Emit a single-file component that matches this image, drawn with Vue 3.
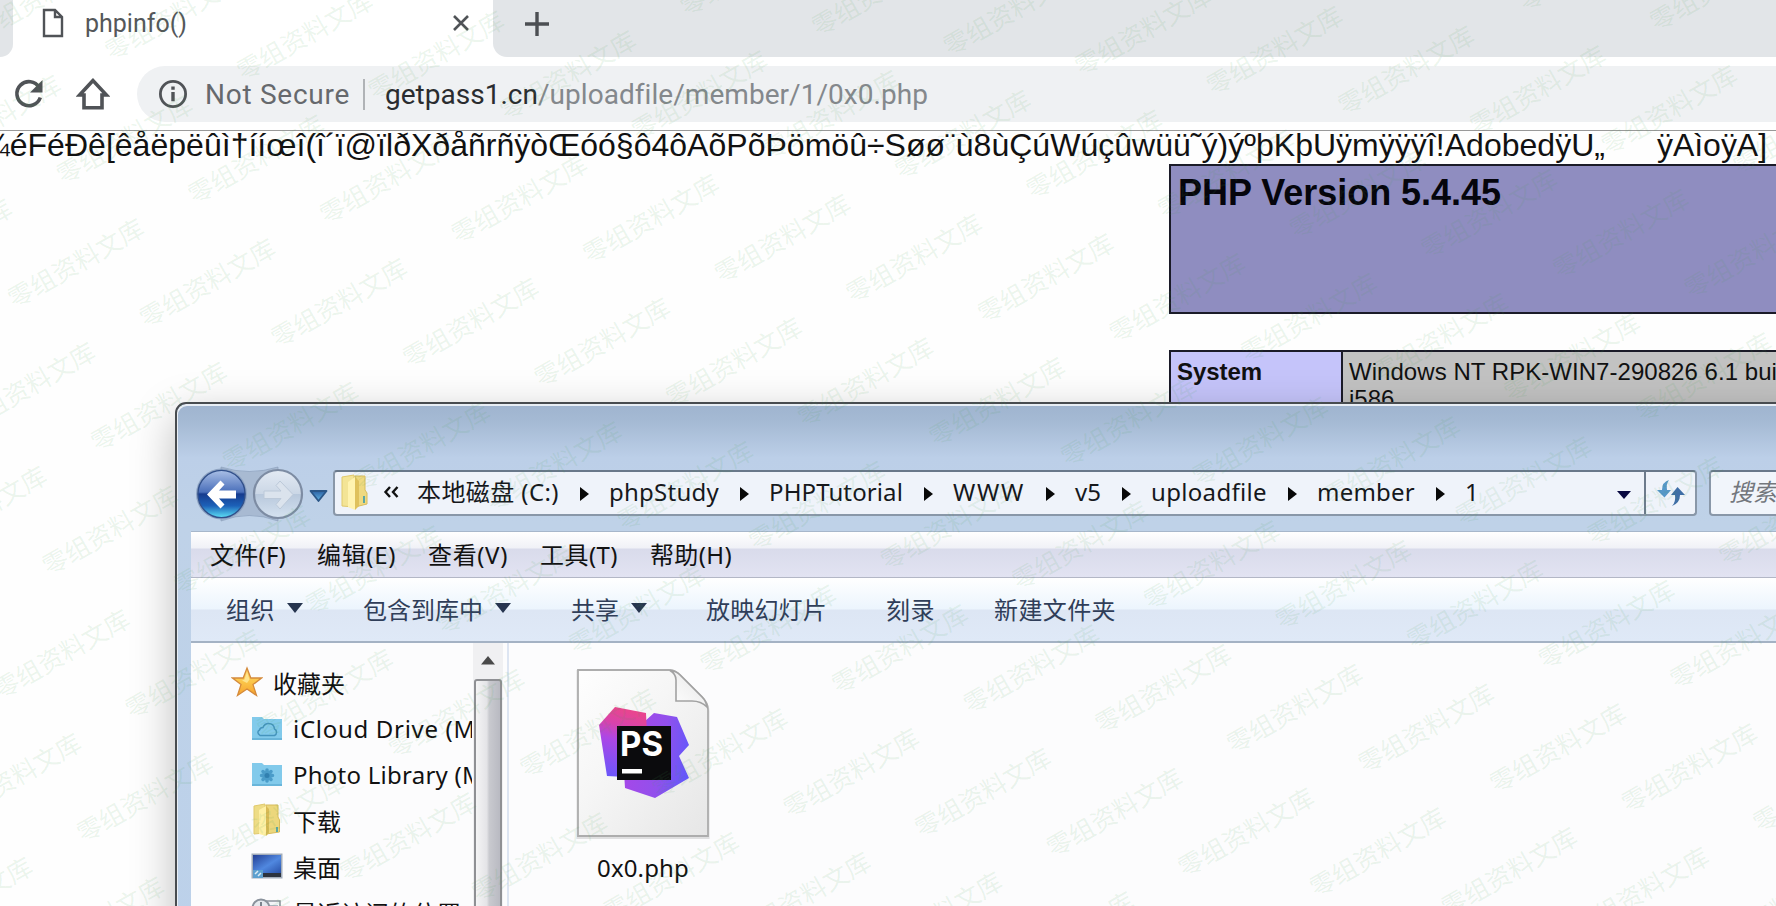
<script setup>
// Spreads a label's letters so that it takes exactly the given width.
const vFit = {
  mounted(el, { value }) {
    const natural = el.getBoundingClientRect().width
    const count = [...el.textContent].length
    el.style.letterSpacing = (value - natural) / count + 'px'
    el.style.width = value + 'px'
  }
}

const crumbs = [
  { text: '本地磁盘 (C:)', w: 142 },
  { text: 'phpStudy', w: 110 },
  { text: 'PHPTutorial', w: 134 },
  { text: 'WWW', w: 72 },
  { text: 'v5', w: 26 },
  { text: 'uploadfile', w: 116 },
  { text: 'member', w: 98 },
  { text: '1', w: 14 }
]

const menus = [
  { text: '文件(F)', w: 76, gap: 31 },
  { text: '编辑(E)', w: 79, gap: 32 },
  { text: '查看(V)', w: 80, gap: 32 },
  { text: '工具(T)', w: 78, gap: 32 },
  { text: '帮助(H)', w: 82, gap: 0 }
]

const commands = [
  { text: '组织', w: 49, drop: true, gap: 60 },
  { text: '包含到库中', w: 120, drop: true, gap: 60 },
  { text: '共享', w: 48, drop: true, gap: 59 },
  { text: '放映幻灯片', w: 121, gap: 59 },
  { text: '刻录', w: 49, gap: 59 },
  { text: '新建文件夹', w: 122, gap: 0 }
]

const places = [
  { icon: 'cloud', text: 'iCloud Drive (M', w: 183 },
  { icon: 'photo', text: 'Photo Library (M', w: 191 },
  { icon: 'folder', text: '下载', w: 48 },
  { icon: 'desktop', text: '桌面', w: 48 },
  { icon: 'recent', text: '最近访问的位置', w: 168 }
]

const dump = '¼éFéÐê[êåëpëûì†ííœî(î´ï@ïlðXðåñrñÿòŒóó§ô4ôAõPõÞömöû÷Søø¨ù8ùÇúWúçûwüü˜ý)ýºþKþUÿmÿÿÿî!AdobedÿU„'

const marks = []
for (let row = -6; row <= 4; row++) {
  for (let col = -4; col <= 18; col++) {
    const x = 21 + col * 131.6 + row * 48.6
    const y = 295 + col * 19.8 - row * 123.7
    if (x > -130 && x < 1780 && y > -15 && y < 985) marks.push({ x, y })
  }
}
</script>

<template>
  <div class="screen">
    <div class="tabs">
      <div class="tab-prev"></div>
      <div class="tab">
        <svg class="doc" width="22" height="30" viewBox="0 0 22 30">
          <path d="M2 2H13L20 9V28H2Z M13 2V9H20" fill="none" stroke="#505357" stroke-width="2.4" />
        </svg>
        <span v-fit="102" class="tab-title">phpinfo()</span>
        <svg class="close" width="18" height="18" viewBox="0 0 18 18">
          <path d="M2 2L16 16M16 2L2 16" stroke="#505357" stroke-width="2.6" />
        </svg>
      </div>
      <div class="tab-rest">
        <svg width="26" height="26" viewBox="0 0 26 26">
          <path d="M13 1V25M1 13H25" stroke="#4c4f53" stroke-width="3.4" />
        </svg>
      </div>
    </div>

    <div class="toolbar">
      <svg class="reload" width="32" height="32" viewBox="0 0 32 32">
        <path d="M26.2 9.5A12 12 0 1 0 27.3 19.5" fill="none" stroke="#505357" stroke-width="3.6" />
        <path d="M29.5 2V14.5H17Z" fill="#505357" />
      </svg>
      <svg class="home" width="34" height="34" viewBox="0 0 34 34">
        <path d="M17 3.6L3.6 18H8V30.8H26V18H30.4Z" fill="none" stroke="#505357" stroke-width="3.6" />
      </svg>
      <div class="omnibox">
        <svg width="30" height="30" viewBox="0 0 30 30">
          <circle cx="15" cy="15" r="12.6" fill="none" stroke="#505357" stroke-width="2.8" />
          <path d="M13.3 7.6H16.7V10.8H13.3ZM13.3 13H16.7V22.2H13.3Z" fill="#505357" />
        </svg>
        <span v-fit="145" class="insecure">Not Secure</span>
        <i class="bar"></i>
        <span v-fit="153" class="host">getpass1.cn</span>
        <span v-fit="389" class="path">/uploadfile/member/1/0x0.php</span>
      </div>
    </div>

    <div class="page">
      <div class="dump">
        <span v-fit="1622">{{ dump }}</span>
        <span v-fit="110" class="tail">ÿAìoÿA]</span>
      </div>
      <div class="php-head"><span v-fit="323">PHP Version 5.4.45</span></div>
      <div class="php-row">
        <div class="php-key"><span v-fit="85">System</span></div>
        <div class="php-val"><span v-fit="428">Windows NT RPK-WIN7-290826 6.1 bui</span><br />i586</div>
      </div>
    </div>

    <div class="window">
      <div class="caption"></div>
      <div class="nav">
        <svg class="nav-buttons" width="162" height="60" viewBox="0 0 162 60">
          <defs>
            <linearGradient id="back" x1="0" y1="0" x2="0" y2="1">
              <stop offset="0" stop-color="#a9bfe6" />
              <stop offset=".46" stop-color="#4a6fba" />
              <stop offset=".5" stop-color="#163b8e" />
              <stop offset=".75" stop-color="#1c61b8" />
              <stop offset="1" stop-color="#5ce0f6" />
            </linearGradient>
            <linearGradient id="fwd" x1="0" y1="0" x2="0" y2="1">
              <stop offset="0" stop-color="#e3eaf3" />
              <stop offset=".49" stop-color="#cbd7e6" />
              <stop offset=".5" stop-color="#b8c8dc" />
              <stop offset="1" stop-color="#d5e2f0" />
            </linearGradient>
            <linearGradient id="drop" x1="0" y1="0" x2="0" y2="1">
              <stop offset="0" stop-color="#2c62a4" />
              <stop offset="1" stop-color="#63b5e4" />
            </linearGradient>
          </defs>
          <path d="M44 3Q72 12 101 3L101 57Q72 46 44 57Z" fill="#a8bad2" stroke="#8599b5" stroke-opacity=".6" />
          <circle cx="44.500" cy="30" r="25.500" fill="#8ea3c2" />
          <circle cx="44.500" cy="30" r="23.6" fill="url(#back)" stroke="#31508a" stroke-width="1.4" />
          <path d="M30 30.500L43.500 16.500L47.500 20.500L42 26.500H59V34.500H42L47.500 40.500L43.500 44.500Z" fill="#fff" />
          <circle cx="101" cy="30" r="24" fill="url(#fwd)" stroke="#7d8ca3" stroke-width="2.2" />
          <path d="M116 30.500L103 17L99 21.500L104 27H87V34.500H104L99 40.500L103 45Z" fill="#dbe3ed" stroke="#bcc9d9" />
          <path d="M133.500 27H149.500L141.500 37Z" fill="url(#drop)" stroke="#2b5788" stroke-width="1.8" stroke-linejoin="round" />
        </svg>
        <div class="address">
          <svg class="folder" width="28" height="38" viewBox="0 0 28 38">
            <path d="M2 4L14 2V34L2 33Z" fill="#f3e496" stroke="#e0c96c" />
            <path d="M15 3H25V17L27 20V31L15 34Z" fill="#efd980" stroke="#d7bc5b" />
            <path d="M8 9L15 4V37L8 34Z" fill="#fff3b0" />
            <path d="M15 4L19 8V33L15 37Z" fill="#dfc15c" />
            <path d="M24 23V30" stroke="#5ba6a5" stroke-width="2" />
          </svg>
          <svg class="more" width="16" height="12" viewBox="0 0 16 12">
            <path d="M7 1L2.500 6L7 11M14.500 1L10 6L14.500 11" fill="none" stroke="#111" stroke-width="2.4" />
          </svg>
          <template v-for="(c, i) in crumbs" :key="c.text">
            <span v-fit="c.w" class="crumb">{{ c.text }}</span>
            <i v-if="i < crumbs.length - 1" class="chev"></i>
          </template>
          <i class="addr-drop"></i>
          <div class="refresh">
            <svg width="30" height="28" viewBox="0 0 30 28">
              <path d="M13 1Q6 3 6 11H1L8.500 18.500L15 11H11Q10 5 13 1Z" fill="#5597c8" />
              <path d="M16 27Q24 24 24 16H29L21.500 8L15 16H19Q20 23 16 27Z" fill="#3f6ea6" />
            </svg>
          </div>
        </div>
        <div class="search"><span v-fit="48">搜索</span></div>
      </div>

      <div class="menubar">
        <span v-for="m in menus" :key="m.text" v-fit="m.w" :style="{ marginRight: m.gap + 'px' }">{{ m.text }}</span>
      </div>

      <div class="commands">
        <div v-for="c in commands" :key="c.text" class="command" :style="{ marginRight: c.gap + 'px' }">
          <span v-fit="c.w">{{ c.text }}</span><i v-if="c.drop"></i>
        </div>
      </div>

      <div class="body">
        <div class="tree">
          <div class="fav">
            <svg width="32" height="32" viewBox="0 0 32 32">
              <defs>
                <linearGradient id="star" x1="0" y1="0" x2="0" y2="1">
                  <stop offset="0" stop-color="#ffd467" />
                  <stop offset=".5" stop-color="#fbc64a" />
                  <stop offset="1" stop-color="#f7a02c" />
                </linearGradient>
              </defs>
              <path d="M16 2L19.800 12H30.500L22 18.600L25.500 29.500L16 23L6.500 29.500L10 18.600L1.500 12H12.200Z" fill="url(#star)" stroke="#d48a3c" stroke-width="1.300" />
              <path d="M16 6L18.500 13.500L16 17L11 14.500L13.500 13.500Z" fill="#fff0a8" opacity=".7" />
            </svg>
            <span v-fit="72">收藏夹</span>
          </div>
          <div v-for="p in places" :key="p.text" class="place">
            <svg v-if="p.icon === 'cloud'" width="32" height="26" viewBox="0 0 32 26">
              <path d="M1 2H11L13 4H31V25H1Z" fill="#82caeb" />
              <path d="M1 24H31" stroke="#69b5da" stroke-width="2" />
              <path d="M9 20.500H23.500A3.600 3.600 0 0 0 23.500 14Q23 8.500 17.500 8.500Q13.500 8.500 12 12.500Q9 12.500 8.500 15Q5 17 9 20.500Z" fill="none" stroke="#4594bd" stroke-width="1.500" />
            </svg>
            <svg v-else-if="p.icon === 'photo'" width="32" height="26" viewBox="0 0 32 26">
              <path d="M1 2H11L13 4H31V25H1Z" fill="#82caeb" />
              <path d="M1 24H31" stroke="#69b5da" stroke-width="2" />
              <g stroke="#4a9cc9" stroke-width="3.500" stroke-linecap="round">
                <path d="M16 9V20M10.500 14.500H21.500M12 10.500L20 18.500M20 10.500L12 18.500" />
              </g>
              <circle cx="16" cy="14.500" r="2.500" fill="#3180b0" />
            </svg>
            <svg v-else-if="p.icon === 'folder'" width="32" height="34" viewBox="0 0 32 34">
              <path d="M3 3L14 1V30L3 31Z" fill="#eedc86" stroke="#e0c96c" />
              <path d="M15 2H27V14L28.500 17V29L15 31Z" fill="#ecd77c" stroke="#d7bc5b" />
              <path d="M8 7L15 3V33L8 31Z" fill="#fff0a5" />
              <path d="M15 3L18 6V30L15 33Z" fill="#d9ba55" />
              <path d="M26 24V29" stroke="#5ba6a5" stroke-width="2" />
            </svg>
            <svg v-else-if="p.icon === 'desktop'" width="32" height="26" viewBox="0 0 32 26">
              <defs>
                <linearGradient id="desk" x1="0" y1="0" x2="1" y2="1">
                  <stop offset="0" stop-color="#243f94" />
                  <stop offset=".55" stop-color="#5088e0" />
                  <stop offset="1" stop-color="#2951a8" />
                </linearGradient>
              </defs>
              <path d="M.500 .500H31.500V25.500H.500Z" fill="#a3adba" />
              <path d="M2 2H30V20H2Z" fill="url(#desk)" />
              <path d="M2 20H30V24H2Z" fill="#2c333e" />
              <path d="M2 17H12V25H2Z" fill="#5da0cf" />
              <path d="M4 21L7 18M7 23L10 20" stroke="#dcecf5" stroke-width="1.500" />
            </svg>
            <svg v-else width="32" height="28" viewBox="0 0 32 28">
              <path d="M12 3H29V27H12Z" fill="#f3f5f8" stroke="#8d939c" stroke-width="1.500" />
              <path d="M18 8H27M18 12H27" stroke="#9aa4b4" stroke-width="1.500" />
              <circle cx="10" cy="10" r="8.500" fill="#e5e9ee" stroke="#8a929c" stroke-width="2" />
              <path d="M10 4V11H14" fill="none" stroke="#59616d" stroke-width="1.500" />
            </svg>
            <span v-fit="p.w">{{ p.text }}</span>
          </div>
        </div>
        <div class="scroll">
          <svg width="16" height="10" viewBox="0 0 16 10"><path d="M1 9.500L8 1L15 9.500Z" fill="#4a4a4a" /></svg>
          <div class="thumb"></div>
        </div>
        <div class="files">
          <div class="file">
            <svg width="140" height="176" viewBox="0 0 140 176">
              <defs>
                <linearGradient id="paper" x1="0" y1="0" x2="1" y2="1">
                  <stop offset="0" stop-color="#fefefe" />
                  <stop offset=".4" stop-color="#f6f6f6" />
                  <stop offset="1" stop-color="#e6e6e6" />
                </linearGradient>
                <linearGradient id="fold" x1="0" y1="1" x2="1" y2="0">
                  <stop offset="0" stop-color="#fff" />
                  <stop offset=".6" stop-color="#f0f0f0" />
                  <stop offset="1" stop-color="#bdbdbd" />
                </linearGradient>
                <linearGradient id="psa" x1=".3" y1="0" x2=".1" y2="1">
                  <stop offset="0" stop-color="#e8458f" />
                  <stop offset=".22" stop-color="#d843ab" />
                  <stop offset=".45" stop-color="#ac47e6" />
                  <stop offset="1" stop-color="#6657fb" />
                </linearGradient>
                <linearGradient id="psb" x1="0" y1=".3" x2="1" y2=".5">
                  <stop offset="0" stop-color="#a946e8" />
                  <stop offset=".6" stop-color="#9250ec" />
                  <stop offset="1" stop-color="#6457fb" />
                </linearGradient>
              </defs>
              <path d="M5 4H96Q102 4 107 9L129 31Q135 37 135 44V170H5Z" fill="none" stroke="#a9a9a9" stroke-width="3" opacity=".35" transform="translate(0 1.500)" />
              <path d="M5 4H96Q102 4 107 9L129 31Q135 37 135 44V170H5Z" fill="url(#paper)" stroke="#adadad" stroke-width="1.800" />
              <path d="M97 4.500Q103 8 103 14V35H119Q128 35 134 41Q133 35 129 31L107 9Q103 5 97 4.500Z" fill="url(#fold)" stroke="#a2a2a2" stroke-width="1.600" />
              <path d="M71 56L81 47L104 51L116 79L106 90L116 112L82 132L52 122L50 90Z" fill="url(#psb)" />
              <path d="M42 41L73 47L75 90L52 111L34 110L26 59Z" fill="url(#psa)" />
              <path d="M44 60H98V114H44Z" fill="#0b0b0d" />
              <path d="M49 103H69V107.500H49Z" fill="#fff" />
              <text x="47" y="90" textLength="43" lengthAdjust="spacingAndGlyphs" class="ps">PS</text>
            </svg>
            <span v-fit="92">0x0.php</span>
          </div>
        </div>
      </div>
    </div>

    <svg class="marks" width="1776" height="906" viewBox="0 0 1776 906">
      <text v-for="(m, i) in marks" :key="i" :transform="`translate(${m.x} ${m.y}) rotate(-29.7)`" x="-12.500" y="9">零组资料文库</text>
    </svg>
  </div>
</template>

<style>
body {
  margin: 0;
  background: #fff;
}
</style>

<style scoped>
.screen {
  position: relative;
  width: 1776px;
  height: 906px;
  overflow: hidden;
  background: #fefefe;
  font-family: "Noto Sans", "Noto Sans CJK SC", sans-serif;
}
svg {
  display: block;
  flex: none;
}
span {
  display: inline-block;
  white-space: pre;
  flex: none;
}
.tabs {
  display: flex;
  height: 57px;
  background: #fff;
  font-family: Roboto, "Liberation Sans", sans-serif;
}
.tab-prev {
  width: 13px;
  background: #e2e5e8;
  border-bottom-right-radius: 13px;
}
.tab {
  display: flex;
  width: 480px;
  height: 46px;
  align-items: center;
}
.doc {
  margin-left: 29px;
}
.tab-title {
  margin-left: 21px;
  font-size: 25px;
  color: #54575a;
}
.close {
  margin-left: 265px;
}
.tab-rest {
  flex: 1;
  box-sizing: border-box;
  padding: 11px 0 0 31px;
  background: #e2e5e8;
  border-bottom-left-radius: 14px;
}
.toolbar {
  display: flex;
  align-items: center;
  height: 73px;
  background: #fff;
  border-bottom: 1px solid #999;
  font-family: Roboto, "Liberation Sans", sans-serif;
  font-size: 28px;
}
.reload {
  margin-left: 13px;
}
.home {
  margin-left: 31px;
}
.omnibox {
  display: flex;
  align-items: center;
  box-sizing: border-box;
  height: 56px;
  flex: 1;
  margin-left: 27px;
  margin-top: 1px;
  padding-left: 21px;
  background: #eff1f3;
  border-radius: 28px 0 0 28px;
}
.insecure {
  margin-left: 17px;
  color: #66696d;
}
.bar {
  width: 2px;
  height: 31px;
  margin: 0 20px 0 13px;
  background: #b0b3b6;
}
.host {
  color: #2a2c2f;
}
.path {
  color: #84888c;
}
.page {
  font-family: "Liberation Sans", Arial, sans-serif;
  color: #111;
}
.dump {
  display: flex;
  height: 33px;
  overflow: hidden;
  font-size: 32px;
  line-height: 29px;
}
.dump span {
  margin-left: -17px;
}
.dump .tail {
  margin-left: 52px;
}
.php-head {
  box-sizing: border-box;
  height: 150px;
  margin-left: 1169px;
  padding: 7px 0 0 7px;
  border: 2px solid #1b1b28;
  border-right: 0;
  background: #8f8dc0;
  font-size: 36px;
  line-height: 40px;
  font-weight: bold;
  color: #05050c;
}
.php-row {
  display: flex;
  box-sizing: border-box;
  height: 80px;
  margin: 36px 0 0 1169px;
  border: 2px solid #1b1b28;
  border-right: 0;
  line-height: 28px;
}
.php-key {
  box-sizing: border-box;
  width: 172px;
  padding: 6px 0 0 6px;
  border-right: 2px solid #1b1b28;
  background: #c5c4fa;
  font-size: 24px;
  font-weight: bold;
}
.php-val {
  flex: 1;
  padding: 6px 0 0 6px;
  overflow: hidden;
  background: #c2c2c2;
  white-space: nowrap;
  font-size: 24px;
  line-height: 27px;
}
.window {
  position: absolute;
  left: 175px;
  top: 402px;
  width: 1640px;
  height: 560px;
  box-sizing: border-box;
  padding-left: 14px;
  border: 2px solid #484c50;
  border-radius: 11px 0 0 0;
  background: linear-gradient(#9fb4cf 0, #a5bad4 18px, #bccfe8 54px, #bfd2e8 120px, #bcd1ea 100%);
  box-shadow: inset 1px 2px 0 #e8eef5, 0 14px 44px rgba(0, 0, 0, 0.27);
}
.caption {
  height: 58px;
}
.nav {
  display: flex;
  height: 69px;
}
.nav-buttons {
  margin-left: -14px;
  margin-top: 2px;
}
.address {
  display: flex;
  flex: none;
  align-items: center;
  box-sizing: border-box;
  width: 1364px;
  height: 46px;
  margin: 8px 0 0 -6px;
  padding-left: 5px;
  border: 2px solid #8997a8;
  border-top-color: #69788a;
  border-radius: 4px;
  background: #eff3fa;
  font-size: 24px;
  color: #16181c;
}
.folder,
.more,
.crumb,
.chev {
  margin-bottom: 3px;
}
.more {
  margin-left: 15px;
  margin-right: 18px;
}
.crumb {
  line-height: 36px;
}
.chev {
  width: 0;
  height: 0;
  margin: 1px 20px 0 21px;
  border: solid transparent;
  border-width: 7px 0 7px 9px;
  border-left-color: #080808;
}
.addr-drop {
  width: 0;
  height: 0;
  margin: 3px 13px 0 auto;
  border: solid transparent;
  border-width: 8px 7px 0;
  border-top-color: #080840;
}
.refresh {
  display: flex;
  width: 49px;
  height: 42px;
  align-items: center;
  justify-content: center;
  border-left: 2px solid #6d7b8c;
}
.search {
  flex: none;
  box-sizing: border-box;
  width: 110px;
  height: 46px;
  margin: 8px 0 0 12px;
  padding-left: 18px;
  border: 2px solid #8997a8;
  border-top-color: #69788a;
  border-radius: 4px;
  background: #f1f5fb;
  font-size: 24px;
  line-height: 40px;
  font-style: italic;
  color: #73777d;
}
.menubar {
  display: flex;
  align-items: center;
  box-sizing: border-box;
  height: 47px;
  padding: 0 0 3px 19px;
  background: linear-gradient(#fff 0, #f0f1f7 16px, #d9dbeb 17px, #e2e3f2 100%);
  border-top: 1px solid #a7b7cb;
  border-bottom: 1px solid #b3b7c6;
  font-size: 24px;
  color: #121212;
}
.commands {
  display: flex;
  align-items: center;
  box-sizing: border-box;
  height: 65px;
  padding: 0 0 3px 35px;
  background: linear-gradient(#fff 0, #ecf5fd 31px, #dde6f4 32px, #dfe9f7 100%);
  border-bottom: 2px solid #a4b2c4;
  font-size: 24px;
  color: #303e59;
}
.command {
  display: flex;
  align-items: center;
}
.command i {
  margin-left: 12px;
  border: solid transparent;
  border-width: 10px 8px 0;
  border-top-color: #26354f;
}
.body {
  display: flex;
  height: 320px;
  background: #fcfcfd;
}
.tree {
  width: 281px;
  margin-right: 1px;
  overflow: hidden;
  padding-top: 16px;
  font-size: 24px;
  color: #111;
}
.fav {
  display: flex;
  align-items: center;
  height: 46px;
  padding-left: 40px;
}
.fav span {
  margin-left: 10px;
}
.place {
  display: flex;
  align-items: center;
  height: 46px;
  padding-left: 60px;
}
.place span {
  margin-left: 10px;
}
.scroll {
  display: flex;
  flex-direction: column;
  align-items: center;
  width: 30px;
  margin-right: 4px;
  padding-top: 12px;
  background: #f0f0f2;
}
.thumb {
  box-sizing: border-box;
  width: 28px;
  height: 300px;
  margin-top: 14px;
  border: 2px solid #8f9094;
  border-radius: 3px;
  background: linear-gradient(90deg, #f4f4f5, #e4e4e7 45%, #c9cacf 55%, #b9bac2);
}
.files {
  flex: 1;
  padding: 23px 0 0 64px;
  border-left: 2px solid #dde5f2;
}
.file {
  display: flex;
  flex-direction: column;
  align-items: center;
  width: 140px;
  font-size: 24px;
  color: #111;
}
.file span {
  margin-top: 9px;
}
.ps {
  font-family: Inter, "Open Sans", sans-serif;
  font-size: 34px;
  font-weight: bold;
  fill: #fff;
}
.marks {
  position: absolute;
  left: 0;
  top: 0;
  pointer-events: none;
  font-family: "Noto Sans CJK SC", sans-serif;
  font-size: 25.3px;
  fill: rgba(70, 160, 80, 0.105);
}
</style>
